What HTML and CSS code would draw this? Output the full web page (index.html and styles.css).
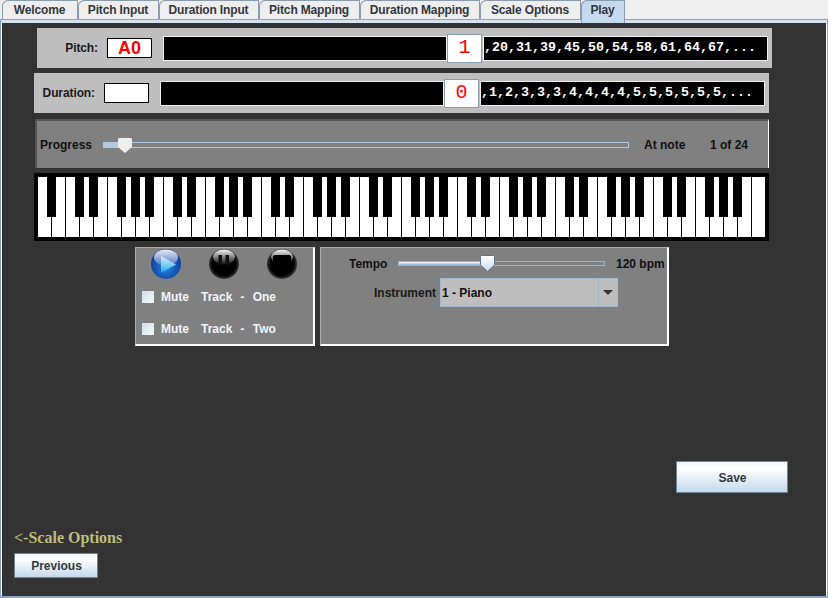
FILE: index.html
```html
<!DOCTYPE html>
<html>
<head>
  <title>Play</title>
  <link rel="stylesheet" href="styles.css">
</head>
<body>
  <div id="app">
    <div class="tabs">
      <div class="tab tab-welcome">Welcome</div>
      <div class="tab tab-pitch">Pitch Input</div>
      <div class="tab tab-duration">Duration Input</div>
      <div class="tab tab-pitch-map">Pitch Mapping</div>
      <div class="tab tab-duration-map">Duration Mapping</div>
      <div class="tab tab-scale">Scale Options</div>
      <div class="tab tab-play selected">Play</div>
    </div>

    <div class="pane">
      <div class="note-row pitch-row">
        <span class="note-label">Pitch:</span>
        <span class="note-name">A0</span>
        <span class="black-field played"></span>
        <span class="current">1</span>
        <span class="black-field upcoming">,20,31,39,45,50,54,58,61,64,67,...</span>
      </div>

      <div class="note-row duration-row">
        <span class="note-label">Duration:</span>
        <span class="note-name"></span>
        <span class="black-field played"></span>
        <span class="current">0</span>
        <span class="black-field upcoming">,1,2,3,3,3,4,4,4,4,5,5,5,5,5,5,...</span>
      </div>

      <div class="progress-panel">
        <span class="progress-label">Progress</span>
        <div class="progress-slider">
          <div class="progress-fill"></div>
          <svg class="thumb" width="14" height="15" viewBox="0 0 14 15"><path d="M1 0H13L14 1V9L7 15L0 9V1Z" fill="#eeeeee"/></svg>
        </div>
        <span class="at-note">At note</span>
        <span class="note-count">1 of 24</span>
      </div>

      <div class="keyboard">
        <i class="key sharp"></i><i class="key"></i>
        <i class="key sharp"></i><i class="key sharp"></i><i class="key"></i><i class="key sharp"></i><i class="key sharp"></i><i class="key sharp"></i><i class="key"></i>
        <i class="key sharp"></i><i class="key sharp"></i><i class="key"></i><i class="key sharp"></i><i class="key sharp"></i><i class="key sharp"></i><i class="key"></i>
        <i class="key sharp"></i><i class="key sharp"></i><i class="key"></i><i class="key sharp"></i><i class="key sharp"></i><i class="key sharp"></i><i class="key"></i>
        <i class="key sharp"></i><i class="key sharp"></i><i class="key"></i><i class="key sharp"></i><i class="key sharp"></i><i class="key sharp"></i><i class="key"></i>
        <i class="key sharp"></i><i class="key sharp"></i><i class="key"></i><i class="key sharp"></i><i class="key sharp"></i><i class="key sharp"></i><i class="key"></i>
        <i class="key sharp"></i><i class="key sharp"></i><i class="key"></i><i class="key sharp"></i><i class="key sharp"></i><i class="key sharp"></i><i class="key"></i>
        <i class="key sharp"></i><i class="key sharp"></i><i class="key"></i><i class="key sharp"></i><i class="key sharp"></i><i class="key sharp"></i><i class="key"></i>
        <i class="key last"></i>
      </div>

      <div class="controls">
        <div class="panel transport">
          <div class="transport-buttons">
            <svg width="32" height="32" viewBox="0 0 32 32">
              <defs>
                <radialGradient id="blueBall" cx="50%" cy="60%" r="55%">
                  <stop offset="0" stop-color="#2a8ae0"/>
                  <stop offset="0.7" stop-color="#1552b0"/>
                  <stop offset="1" stop-color="#0f3f96"/>
                </radialGradient>
                <linearGradient id="blueGloss" x1="0" y1="0" x2="0" y2="1">
                  <stop offset="0" stop-color="#e8e8f4"/>
                  <stop offset="1" stop-color="#4f78c0"/>
                </linearGradient>
                <linearGradient id="playArrow" x1="0" y1="0" x2="0" y2="1">
                  <stop offset="0" stop-color="#d8eef8"/>
                  <stop offset="0.5" stop-color="#7fd0f4"/>
                  <stop offset="1" stop-color="#10a8ec"/>
                </linearGradient>
                <linearGradient id="blackGloss" x1="0" y1="0" x2="0" y2="1">
                  <stop offset="0" stop-color="#f4f4f4"/>
                  <stop offset="1" stop-color="#111111"/>
                </linearGradient>
                <radialGradient id="blackBall" cx="50%" cy="50%" r="50%">
                  <stop offset="0" stop-color="#000000"/>
                  <stop offset="0.78" stop-color="#000000"/>
                  <stop offset="1" stop-color="#3a3a3a"/>
                </radialGradient>
              </defs>
              <circle cx="16" cy="16" r="15" fill="url(#blueBall)"/>
              <ellipse cx="16" cy="9.5" rx="12" ry="8" fill="url(#blueGloss)"/>
              <path d="M11 8L26 16.5L11 25Z" fill="url(#playArrow)"/>
            </svg>
            <svg width="32" height="32" viewBox="0 0 32 32">
              <circle cx="16" cy="16" r="15" fill="url(#blackBall)"/>
              <ellipse cx="16" cy="9" rx="11" ry="7.5" fill="url(#blackGloss)"/>
              <rect x="10.5" y="7" width="3.5" height="10" fill="#111"/>
              <rect x="17.5" y="7" width="3.5" height="10" fill="#111"/>
            </svg>
            <svg width="32" height="32" viewBox="0 0 32 32">
              <circle cx="16" cy="16" r="15" fill="url(#blackBall)"/>
              <ellipse cx="16" cy="9" rx="11" ry="7.5" fill="url(#blackGloss)"/>
              <rect x="7" y="7" width="18" height="18" rx="2" fill="#000"/>
            </svg>
          </div>
          <div class="mute-row"><span class="checkbox"></span><span class="mute">Mute</span><span class="track">Track&nbsp; -&nbsp; One</span></div>
          <div class="mute-row"><span class="checkbox"></span><span class="mute">Mute</span><span class="track">Track&nbsp; -&nbsp; Two</span></div>
        </div>

        <div class="panel settings">
          <div class="tempo-row">
            <span class="tempo-label">Tempo</span>
            <div class="tempo-slider">
              <div class="tempo-fill"></div>
              <svg class="thumb" width="15" height="17" viewBox="0 0 15 17">
                <defs>
                  <linearGradient id="thumbShade" x1="0" y1="0" x2="0" y2="1">
                    <stop offset="0" stop-color="#ffffff"/>
                    <stop offset="1" stop-color="#c8daea"/>
                  </linearGradient>
                </defs>
                <path d="M1.5 .5H13.5L14.5 1.5V10L7.5 16.5L.5 10V1.5Z" fill="url(#thumbShade)" stroke="#66727f"/>
              </svg>
            </div>
            <span class="tempo-value">120 bpm</span>
          </div>
          <div class="instrument-row">
            <span class="instrument-label">Instrument</span>
            <div class="combo">
              <span class="combo-value">1 - Piano</span>
              <span class="combo-arrow"></span>
            </div>
          </div>
        </div>
      </div>

      <div class="save-row"><button class="btn save">Save</button></div>

      <div class="footer">
        <div class="back-link">&lt;-Scale Options</div>
        <button class="btn previous">Previous</button>
      </div>
    </div>
  </div>
</body>
</html>
```

FILE: styles.css
```css
/* Swing look, dark pane */
* {
  box-sizing: border-box;
}

body {
  margin: 0;
  background-color: #eeeeee;
  font-family: "Liberation Sans", Arial, sans-serif;
  font-size: 12px;
  font-weight: bold;
  color: #111;
}

#app {
  width: 828px;
  height: 598px;
  display: flex;
  flex-direction: column;
}

.tabs {
  display: flex;
  height: 19px;
  padding-left: 2px;
  flex-shrink: 0;
}

.tab {
  height: 19px;
  border: 1px solid #8a9bae;
  border-bottom: none;
  border-left: none;
  border-top-left-radius: 6px;
  background-color: #eeeeee;
  color: #333740;
  text-align: center;
  line-height: 19px;
  letter-spacing: -0.15px;
  box-shadow: inset 1px 0 0 #8a9bae;
}

.tab-welcome { width: 76px; }
.tab-pitch { width: 81px; }
.tab-duration { width: 100px; }
.tab-pitch-map { width: 101px; }
.tab-duration-map { width: 120px; }
.tab-scale { width: 101px; }
.tab-play { width: 44px; }

.tab.selected {
  height: 23px;
  background-color: #c4d8ee;
  position: relative;
  z-index: 1;
}

.pane {
  flex: 1;
  padding: 8px 0 0 0;
  border: 1px solid #8aa4c8;
  border-bottom-width: 2px;
  background-color: #333333;
  box-shadow: inset 0 3px 0 #d4e2f2, inset 1px 0 0 #ffffff, inset -1px 0 0 #ffffff;
  display: flex;
  flex-direction: column;
}

/* note rows */
.note-row {
  width: 735px;
  height: 40px;
  background-color: #bebebe;
  display: flex;
  align-items: center;
}

.pitch-row {
  margin-left: 36px;
}

.duration-row {
  margin-left: 33px;
  margin-top: 5px;
}

.note-label {
  width: 61px;
  text-align: right;
  color: #1a1a1a;
  letter-spacing: -0.1px;
}

.note-name {
  width: 45px;
  height: 20px;
  margin-left: 9px;
  border: 1px solid #000;
  background-color: #fff;
  color: #ff0000;
  font-size: 18px;
  line-height: 19px;
  text-align: center;
}

.black-field {
  height: 25px;
  background-color: #000;
  border: 1px solid #f0f0f0;
  color: #fff;
  font-family: "Liberation Mono", monospace;
  font-size: 13.33px;
  line-height: 22px;
  white-space: nowrap;
  overflow: hidden;
}

.played {
  width: 284px;
  margin-left: 11px;
}

.current {
  width: 35px;
  height: 29px;
  border: 1px solid #8a9bae;
  background-color: #fff;
  color: #ff0000;
  font-family: "Liberation Mono", monospace;
  font-size: 20px;
  font-weight: normal;
  line-height: 26px;
  text-align: center;
}

.upcoming {
  width: 285px;
  margin-left: 1px;
}

/* progress */
.progress-panel {
  width: 734px;
  height: 49px;
  margin: 6px 0 0 34px;
  background-color: #808080;
  border: 2px solid #555555;
  border-right: 1px solid #ffffff;
  border-bottom: none;
  display: flex;
  align-items: center;
}

.progress-label {
  width: 63px;
  margin-left: 3px;
}

.progress-slider {
  width: 526px;
  height: 6px;
  border: 1px solid #b0c8e0;
  position: relative;
  margin-top: 1px;
}

.progress-fill {
  width: 15px;
  height: 4px;
  background-color: #b0c8e0;
}

.progress-slider .thumb {
  position: absolute;
  left: 14px;
  top: -5px;
}

.at-note {
  margin-left: 15px;
  width: 66px;
}

/* keyboard */
.keyboard {
  width: 735px;
  height: 68px;
  margin: 5px 0 0 33px;
  padding: 4px;
  background-color: #000;
  display: flex;
}

.key {
  display: block;
  width: 14px;
  height: 60px;
  background-color: #fff;
  border-right: 1px solid #000;
  position: relative;
}

.key.last {
  width: 13px;
  border-right: none;
}

.key.sharp::after {
  content: "";
  position: absolute;
  left: 9px;
  top: 0;
  width: 9px;
  height: 40px;
  background-color: #000;
  z-index: 1;
}

/* transport and settings */
.controls {
  display: flex;
  margin: 6px 0 0 134px;
  gap: 5px;
}

.panel {
  height: 99px;
  background-color: #808080;
  border: 1px solid #aaaaaa;
  border-right: 2px solid #ffffff;
  border-bottom: 2px solid #ffffff;
}

.transport {
  width: 180px;
  color: #f0f4fa;
}

.transport-buttons {
  display: flex;
  gap: 26px;
  padding-left: 14px;
}

.mute-row {
  display: flex;
  align-items: center;
  height: 14px;
  padding-left: 6px;
  margin-top: 18px;
}

.transport-buttons + .mute-row {
  margin-top: 10px;
}

.checkbox {
  width: 12px;
  height: 12px;
  margin-right: 7px;
  background: linear-gradient(135deg, #d0deee, #f6f9fc);
}

.mute {
  width: 40px;
}

.track {
  word-spacing: 0.75px;
}

.settings {
  width: 349px;
}

.tempo-row {
  display: flex;
  align-items: center;
  height: 17px;
  margin-top: 7px;
}

.tempo-label {
  width: 77px;
  padding-left: 28px;
}

.tempo-slider {
  width: 207px;
  height: 5px;
  border: 1px solid #9ab0c8;
  position: relative;
}

.tempo-fill {
  width: 83px;
  height: 3px;
  background: linear-gradient(#ffffff, #8fb0d8);
}

.tempo-slider .thumb {
  position: absolute;
  left: 81px;
  top: -7px;
}

.tempo-value {
  margin-left: 11px;
}

.instrument-row {
  display: flex;
  align-items: center;
  margin-top: 6px;
}

.instrument-label {
  width: 115px;
  padding-top: 1px;
  text-align: right;
  color: #1a1a1a;
}

.combo {
  width: 178px;
  height: 29px;
  margin-left: 4px;
  display: flex;
  border: 1px solid #a3b8cc;
  background-color: #bebebe;
}

.combo-value {
  flex: 1;
  padding-left: 1px;
  line-height: 29px;
}

.combo-arrow {
  width: 19px;
  border-left: 1px solid #a3b8cc;
  position: relative;
}

.combo-arrow::after {
  content: "";
  position: absolute;
  left: 4px;
  top: 11px;
  border-left: 5px solid transparent;
  border-right: 5px solid transparent;
  border-top: 5px solid #333;
}

/* buttons */
.btn {
  display: block;
  padding: 1px 0 0 1px;
  border: 1px solid #6f8296;
  background: linear-gradient(#eef5fb, #ffffff 22%, #c4d8ea);
  color: #333844;
  font-family: "Liberation Sans", Arial, sans-serif;
  font-size: 12px;
  font-weight: bold;
}

.save-row {
  margin: 115px 0 0 675px;
}

.save {
  width: 112px;
  height: 32px;
}

.footer {
  margin: 36px 0 0 13px;
}

.back-link {
  height: 24px;
  color: #bdbd7e;
  font-family: "Liberation Serif", serif;
  font-size: 16px;
  line-height: 18px;
}

.previous {
  width: 84px;
  height: 25px;
}
```
